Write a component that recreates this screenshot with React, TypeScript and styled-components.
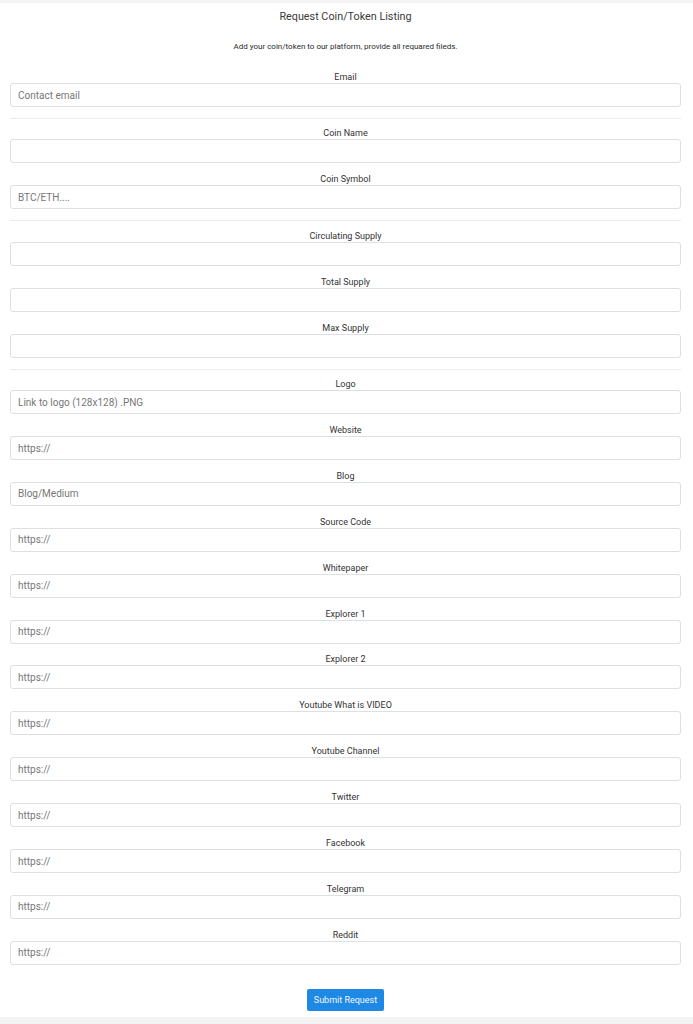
import React from "react";
import styled, { createGlobalStyle } from "styled-components";

const GlobalStyle = createGlobalStyle`
  html, body {
    margin: 0;
    padding: 0;
    background: #f4f4f5;
    font-family: Roboto, "Liberation Sans", Arial, sans-serif;
    color: #333;
  }
  * { box-sizing: border-box; }
`;

const Page = styled.div`
  padding-top: 3px;
  background: #f4f4f5;
`;

const Card = styled.form`
  background: #fff;
  padding: 6px 12px 6px 10px;
  display: flex;
  flex-direction: column;
`;

const Title = styled.h1`
  margin: 0;
  font-size: 10.8px;
  font-weight: 400;
  line-height: 15px;
  text-align: center;
  color: #3a3a3a;
`;

const Subtitle = styled.p`
  margin: 17px 0 0;
  font-size: 8px;
  line-height: 12px;
  text-align: center;
  color: #2a2a2a;
`;

const Fields = styled.div`
  margin-top: 19px;
  display: flex;
  flex-direction: column;
`;

const Field = styled.label`
  display: flex;
  flex-direction: column;
  margin-bottom: 10.9px;
`;

const Label = styled.span`
  font-size: 9px;
  line-height: 11px;
  text-align: center;
  color: #333;
`;

const Input = styled.input`
  width: 100%;
  height: 24px;
  border: 1px solid #dcdfe3;
  border-radius: 3px;
  padding: 0 7px;
  font-family: inherit;
  font-size: 10px;
  color: #333;
  background: #fff;
  outline: none;
  &::placeholder {
    color: #777;
  }
`;

const Divider = styled.hr`
  margin: 0 0 9.6px;
  border: none;
  border-top: 1px solid #ececec;
`;

const Actions = styled.div`
  display: flex;
  justify-content: center;
  margin-top: 13px;
`;

const SubmitButton = styled.button`
  height: 22px;
  padding: 0 7px;
  border: none;
  border-radius: 2px;
  background: #1e88e5;
  color: #f4f8ff;
  font-family: inherit;
  font-size: 9px;
  cursor: pointer;
`;

type FieldDef = { label: string; placeholder?: string } | "divider";

const fields: FieldDef[] = [
  { label: "Email", placeholder: "Contact email" },
  "divider",
  { label: "Coin Name" },
  { label: "Coin Symbol", placeholder: "BTC/ETH...." },
  "divider",
  { label: "Circulating Supply" },
  { label: "Total Supply" },
  { label: "Max Supply" },
  "divider",
  { label: "Logo", placeholder: "Link to logo (128x128) .PNG" },
  { label: "Website", placeholder: "https://" },
  { label: "Blog", placeholder: "Blog/Medium" },
  { label: "Source Code", placeholder: "https://" },
  { label: "Whitepaper", placeholder: "https://" },
  { label: "Explorer 1", placeholder: "https://" },
  { label: "Explorer 2", placeholder: "https://" },
  { label: "Youtube What is VIDEO", placeholder: "https://" },
  { label: "Youtube Channel", placeholder: "https://" },
  { label: "Twitter", placeholder: "https://" },
  { label: "Facebook", placeholder: "https://" },
  { label: "Telegram", placeholder: "https://" },
  { label: "Reddit", placeholder: "https://" },
];

export default function App() {
  return (
    <Page>
      <GlobalStyle />
      <Card onSubmit={(e) => e.preventDefault()}>
        <Title>Request Coin/Token Listing</Title>
        <Subtitle>Add your coin/token to our platform, provide all requared fileds.</Subtitle>
        <Fields>
          {fields.map((f, i) =>
            f === "divider" ? (
              <Divider key={i} />
            ) : (
              <Field key={i}>
                <Label>{f.label}</Label>
                <Input type="text" placeholder={f.placeholder} />
              </Field>
            )
          )}
        </Fields>
        <Actions>
          <SubmitButton type="submit">Submit Request</SubmitButton>
        </Actions>
      </Card>
    </Page>
  );
}
